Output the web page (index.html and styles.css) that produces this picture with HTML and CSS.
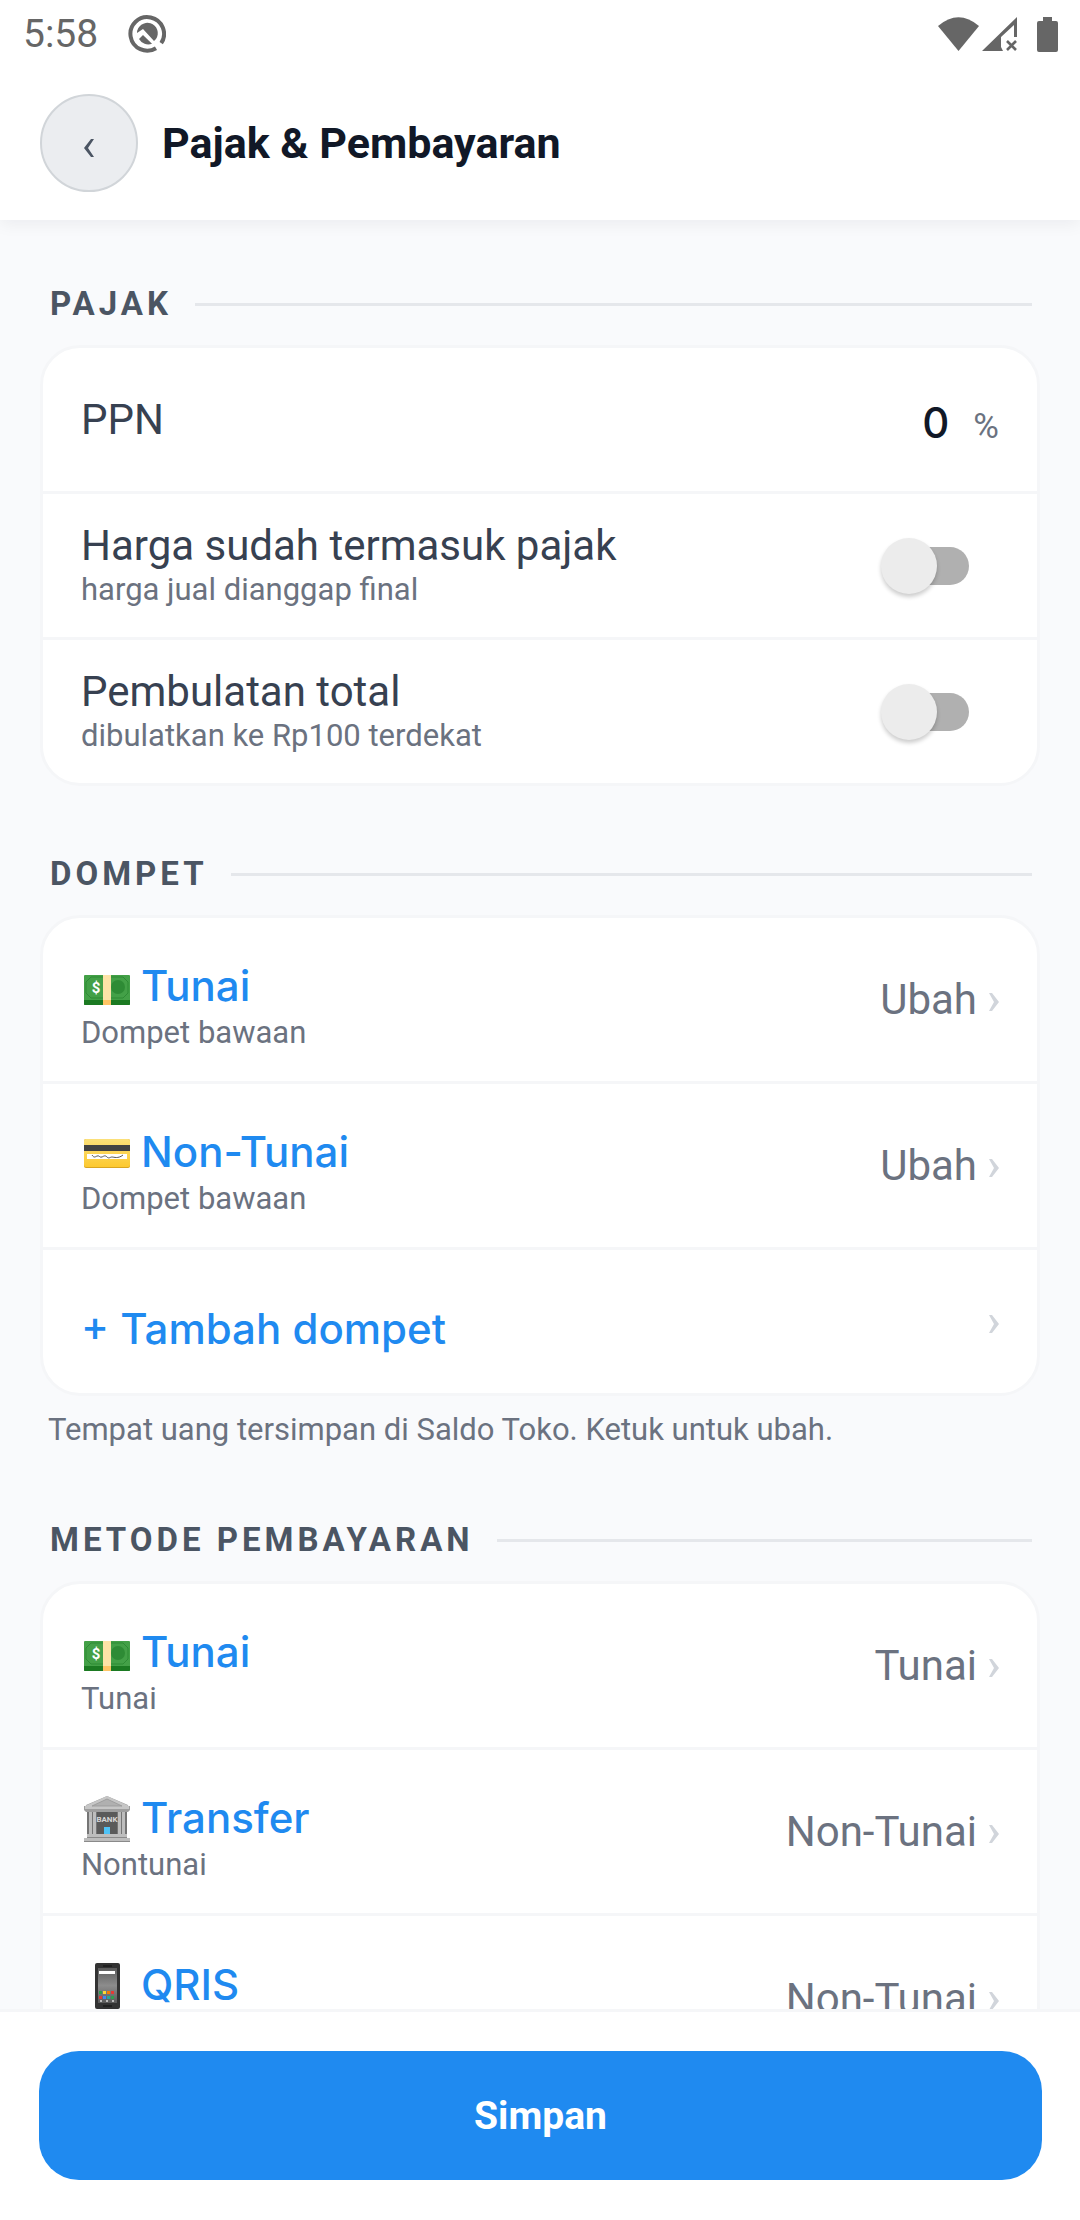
FILE: index.html
```html
<!DOCTYPE html>
<html lang="id">
<head>
  <meta charset="UTF-8" />
  <meta name="viewport" content="width=device-width, initial-scale=1.0" />
  <title>Pajak &amp; Pembayaran</title>
  <link rel="stylesheet" href="styles.css">
</head>
<body>
  <!-- emoji-style icons shared by the rows -->
  <svg class="sprite" aria-hidden="true">
    <defs>
      <linearGradient id="steel" x1="0" y1="0" x2="0" y2="1">
        <stop offset="0" stop-color="#5c5c5c" />
        <stop offset="0.5" stop-color="#8c8c8c" />
        <stop offset="1" stop-color="#5a5a5a" />
      </linearGradient>
      <linearGradient id="gold" x1="0" y1="0" x2="0" y2="1">
        <stop offset="0" stop-color="#fbe07a" />
        <stop offset="1" stop-color="#fdc92f" />
      </linearGradient>
      <symbol id="cash" viewBox="0 -2 48 48">
        <rect x="1" y="10" width="46" height="30" rx="1" fill="#43a047" />
        <path d="M1 35h46v4a1 1 0 0 1-1 1H2a1 1 0 0 1-1-1z" fill="#1b7a22" />
        <path d="M8 12h32l5 5v11l-5 5H8l-5-5V17z" fill="none" stroke="#2e8b35" stroke-width="1" />
        <circle cx="35" cy="22" r="7" fill="#2e8b35" />
        <path d="M20 10h8v25h-8z" fill="#fde3a7" />
        <path d="M20 35h8v5h-8z" fill="#ffc566" />
        <text x="13" y="28" text-anchor="middle" class="dollar">$</text>
      </symbol>
      <symbol id="card" viewBox="0 0 48 48">
        <rect x="1" y="10" width="46" height="29" rx="2" fill="#d9a520" />
        <rect x="1" y="10" width="46" height="28" rx="2" fill="url(#gold)" />
        <path d="M1 16h46v6H1z" fill="#424242" />
        <path d="M4 25h40v5H4z" fill="#fff" />
        <path d="M9 26c2 3 3 2 5 1s3 2 5 1 3-2 5 0 3 0 5 0 6 2 11-2" fill="none" stroke="#424242" stroke-width="0.9" />
      </symbol>
      <symbol id="bank" viewBox="0 0 48 48">
        <path d="M4 14h40v26H4z" fill="#757575" />
        <path d="M14 16h20v24H14z" fill="#5a5a5a" />
        <path d="M6 16h3v24H6zM10 16h3v24h-3zM35 16h3v24h-3zM39 16h3v24h-3z" fill="#bdbdbd" />
        <path d="M24 1L3 10v1H1v4l2 2h42l2-2v-4h-2v-1z" fill="#9e9e9e" />
        <path d="M24 1L2 11v3h44v-3z" fill="#c6c6c6" />
        <path d="M24 4L9 11h30z" fill="#b0b0b0" stroke="#989898" stroke-width="0.8" />
        <path d="M21 32h6v9h-6z" fill="#4fc3f7" />
        <path d="M4 39h40v4h3v4H1v-4h3z" fill="#bdbdbd" />
        <path d="M4 42.5h40M1 46.5h46" stroke="#8a8a8a" />
        <text x="24" y="27" text-anchor="middle" class="bank-sign">BANK</text>
      </symbol>
      <symbol id="phone" viewBox="0 0 48 48">
        <rect x="12" y="1" width="25" height="46" rx="2" fill="#333" />
        <rect x="15" y="6" width="19" height="35" fill="url(#steel)" />
        <path d="M20 4h9M20 44h9" stroke="#111" />
        <path d="M16 9h16v3H16z" fill="#fff" />
        <path d="M16 29h3v3h-3zM28 34h3v3h-3z" fill="#2e9e4f" />
        <path d="M20 29h3v3h-3z" fill="#fdd835" />
        <path d="M24 29h3v3h-3z" fill="#f57c00" />
        <path d="M28 29h3v3h-3zM16 34h3v3h-3z" fill="#e53935" />
        <path d="M20 34h3v3h-3z" fill="#4285f4" />
        <path d="M24 34h3v3h-3z" fill="#26a69a" />
        <path d="M17 39h2M23 39h2M29 39h2" stroke="#ddd" stroke-width="1.5" />
      </symbol>
      <symbol id="chevron" viewBox="0 0 10 18">
        <path d="M0 0h3l7 9-7 9H0l5-9z" />
      </symbol>
    </defs>
  </svg>

  <div class="status-bar">
    <span class="clock">5:58</span>
    <svg class="status-q" viewBox="0 0 38 38">
      <path d="M28 33.2A16.8 16.8 0 1 1 33.2 28.2" fill="none" stroke="#666" stroke-width="4" />
      <path d="M9 18a10.4 10.4 0 1 1 19 6l-2 2-11-12z" fill="#666" />
      <path d="M15 20l9 8.800a10.600 10.600 0 0 1-13-4.800z" fill="#666" />
    </svg>
    <div class="status-icons">
      <svg class="wifi" viewBox="0 0 41 34"><path d="M0 9Q20.500-8.500 41 9L20.500 34z" fill="#666" /></svg>
      <svg class="signal" viewBox="0 0 35 34">
        <path d="M35 0v20h-3V8L19 20v10l2 4H0z" fill="#666" />
        <path d="M25 24l9 9M34 24l-9 9" stroke="#666" stroke-width="2.600" />
      </svg>
      <svg class="battery" viewBox="0 0 21 35"><path d="M6 0h9v4h4a2 2 0 0 1 2 2v27a2 2 0 0 1-2 2H2a2 2 0 0 1-2-2V6a2 2 0 0 1 2-2h4z" fill="#666" /></svg>
    </div>
  </div>

  <header class="top-bar">
    <button class="back-btn" type="button" aria-label="Kembali">
      <svg viewBox="0 0 10 18"><path d="M10 0H7L0 9l7 9h3L4 9z" /></svg>
    </button>
    <h1 class="page-title">Pajak &amp; Pembayaran</h1>
  </header>

  <main class="content">
    <section class="group">
      <h2 class="group-title">PAJAK</h2>
      <div class="panel">
        <div class="row">
          <label class="row-label" for="ppn">PPN</label>
          <div class="percent">
            <input class="percent-input" id="ppn" type="text" inputmode="decimal" value="0" />
            <span class="percent-unit">%</span>
          </div>
        </div>
        <div class="row">
          <label class="row-text" for="include-tax">
            <span class="row-label">Harga sudah termasuk pajak</span>
            <span class="row-sub">harga jual dianggap final</span>
          </label>
          <input class="switch" id="include-tax" type="checkbox" />
        </div>
        <div class="row">
          <label class="row-text" for="rounding">
            <span class="row-label">Pembulatan total</span>
            <span class="row-sub">dibulatkan ke Rp100 terdekat</span>
          </label>
          <input class="switch" id="rounding" type="checkbox" />
        </div>
      </div>
    </section>

    <section class="group">
      <h2 class="group-title">DOMPET</h2>
      <div class="panel">
        <a class="row row-tall" href="#dompet-tunai">
          <span class="row-text">
            <span class="row-link"><svg class="emoji"><use href="#cash" /></svg>Tunai</span>
            <span class="row-sub">Dompet bawaan</span>
          </span>
          <span class="row-value">Ubah <svg class="chevron"><use href="#chevron" /></svg></span>
        </a>
        <a class="row row-tall" href="#dompet-non-tunai">
          <span class="row-text">
            <span class="row-link"><svg class="emoji"><use href="#card" /></svg>Non-Tunai</span>
            <span class="row-sub">Dompet bawaan</span>
          </span>
          <span class="row-value">Ubah <svg class="chevron"><use href="#chevron" /></svg></span>
        </a>
        <a class="row" href="#tambah">
          <span class="row-link row-add">+ Tambah dompet</span>
          <span class="row-value"><svg class="chevron"><use href="#chevron" /></svg></span>
        </a>
      </div>
      <p class="hint">Tempat uang tersimpan di Saldo Toko. Ketuk untuk ubah.</p>
    </section>

    <section class="group">
      <h2 class="group-title">METODE PEMBAYARAN</h2>
      <div class="panel">
        <a class="row row-tall" href="#metode-tunai">
          <span class="row-text">
            <span class="row-link"><svg class="emoji"><use href="#cash" /></svg>Tunai</span>
            <span class="row-sub">Tunai</span>
          </span>
          <span class="row-value">Tunai <svg class="chevron"><use href="#chevron" /></svg></span>
        </a>
        <a class="row row-tall" href="#metode-transfer">
          <span class="row-text">
            <span class="row-link"><svg class="emoji"><use href="#bank" /></svg>Transfer</span>
            <span class="row-sub">Nontunai</span>
          </span>
          <span class="row-value">Non-Tunai <svg class="chevron"><use href="#chevron" /></svg></span>
        </a>
        <a class="row row-tall" href="#metode-qris">
          <span class="row-text">
            <span class="row-link"><svg class="emoji"><use href="#phone" /></svg>QRIS</span>
            <span class="row-sub">Nontunai</span>
          </span>
          <span class="row-value">Non-Tunai <svg class="chevron"><use href="#chevron" /></svg></span>
        </a>
      </div>
    </section>
  </main>

  <footer class="save-bar">
    <button class="save-btn" type="button">Simpan</button>
  </footer>
</body>
</html>
```

FILE: styles.css
```css
* {
  margin: 0;
  padding: 0;
  box-sizing: border-box;
}
body {
  display: flex;
  flex-direction: column;
  height: 100vh;
  overflow: hidden;
  font-family: Roboto, sans-serif;
  background: #f9fafc;
  color: #374151;
}
.sprite {
  position: absolute;
  width: 0;
  height: 0;
}
.dollar {
  font: 700 15px Roboto, sans-serif;
  fill: #fff;
}
.bank-sign {
  font: 700 8px Roboto, sans-serif;
  fill: #d6d6d6;
}

/* status bar */
.status-bar {
  display: flex;
  align-items: center;
  flex-shrink: 0;
  height: 66px;
  padding: 2px 22px 0 23px;
  background: #fff;
  color: #666;
  z-index: 2;
}
.clock {
  font-size: 39px;
  line-height: 48px;
  margin-right: 30px;
}
.status-q {
  width: 38px;
  height: 38px;
}
.status-icons {
  display: flex;
  align-items: center;
  margin-left: auto;
}
.wifi {
  width: 41px;
  height: 34px;
}
.signal {
  width: 35px;
  height: 34px;
  margin: 0 20px 0 3px;
}
.battery {
  width: 21px;
  height: 35px;
}

/* header */
.top-bar {
  display: flex;
  align-items: center;
  flex-shrink: 0;
  gap: 24px;
  padding: 28px 40px;
  background: #fff;
  box-shadow: 0 4px 16px rgba(17, 24, 39, 0.06);
  z-index: 1;
}
.status-bar,
.top-bar {
  position: relative;
}
.back-btn {
  display: flex;
  align-items: center;
  justify-content: center;
  width: 98px;
  height: 98px;
  padding-top: 10px;
  border: 2px solid #d1d5d9;
  border-radius: 50%;
  background: #ebedf0;
}
.back-btn svg {
  width: 10px;
  height: 18px;
  fill: #4b5563;
}
.page-title {
  font-size: 43px;
  line-height: 50px;
  font-weight: 700;
  color: #111827;
}

/* groups */
.content {
  flex: 1;
  min-height: 0;
  overflow-y: auto;
  scrollbar-width: none;
  padding: 64px 40px 0;
}
.group {
  margin-bottom: 68px;
}
.group-title {
  display: flex;
  align-items: center;
  gap: 23px;
  padding: 0 8px 0 10px;
  margin-bottom: 21px;
  font-size: 33px;
  line-height: 40px;
  font-weight: 700;
  letter-spacing: 4px;
  color: #4b5563;
}
.group-title::after {
  content: '';
  flex: 1;
  height: 3px;
  background: #e5e7eb;
}
.panel {
  border: 3px solid #f5f6f8;
  border-radius: 40px;
  background: #fff;
}
.row {
  display: flex;
  align-items: center;
  justify-content: space-between;
  min-height: 146px;
  padding: 0 38px;
  border-bottom: 3px solid #f5f6f8;
  color: inherit;
  text-decoration: none;
}
.row:last-child {
  min-height: 143px;
  border-bottom: 0;
}
.row-tall,
.row-tall:last-child {
  min-height: 166px;
}
.row-text {
  display: flex;
  flex-direction: column;
}
.row-tall .row-text {
  padding-top: 12px;
}
.row-label {
  font-size: 42px;
  line-height: 48px;
}
.row-sub {
  font-size: 31px;
  line-height: 40px;
  color: #6b7280;
}
.row-link {
  display: flex;
  align-items: center;
  gap: 10px;
  font-family: Inter, sans-serif;
  font-size: 42px;
  line-height: 54px;
  font-weight: 500;
  color: #1f8af0;
}
.row-add {
  padding-top: 14px;
}
.row-value {
  display: flex;
  align-items: center;
  gap: 12px;
  font-size: 42px;
  line-height: 48px;
  color: #6b7280;
}
.emoji {
  width: 50px;
  height: 50px;
  padding: 2px 0 0 2px;
}
.chevron {
  width: 10px;
  height: 18px;
  margin-top: 4px;
  fill: #d1d5db;
}
.hint {
  padding: 12px 8px 0;
  font-size: 31px;
  line-height: 44px;
  color: #6b7280;
}

/* form controls */
.percent {
  display: flex;
  align-items: baseline;
  gap: 24px;
  padding-top: 6px;
}
.percent-input {
  width: 120px;
  border: 0;
  background: none;
  font-family: Inter, sans-serif;
  font-size: 42px;
  line-height: 50px;
  font-weight: 500;
  text-align: right;
  color: #111827;
}
.percent-unit {
  font-size: 35px;
  color: #6b7280;
}
.switch {
  appearance: none;
  display: flex;
  align-items: center;
  width: 80px;
  height: 38px;
  margin-right: 30px;
  border-radius: 19px;
  background: #b0b0b0;
}
.switch::before {
  content: '';
  flex-shrink: 0;
  width: 56px;
  height: 56px;
  margin-left: -8px;
  border-radius: 50%;
  background: #ececec;
  box-shadow: 0 3px 4px rgba(0, 0, 0, 0.2);
}
.switch:checked {
  justify-content: flex-end;
  background: #1f8af0;
}

/* footer */
.save-bar {
  flex-shrink: 0;
  padding: 39px 38px 40px 39px;
  border-top: 3px solid #f5f6f8;
  background: #fff;
}
.save-btn {
  width: 100%;
  height: 129px;
  border: 0;
  border-radius: 40px;
  background: #1f8af0;
  font-family: Roboto, sans-serif;
  font-size: 39px;
  font-weight: 700;
  color: #fff;
}
```
